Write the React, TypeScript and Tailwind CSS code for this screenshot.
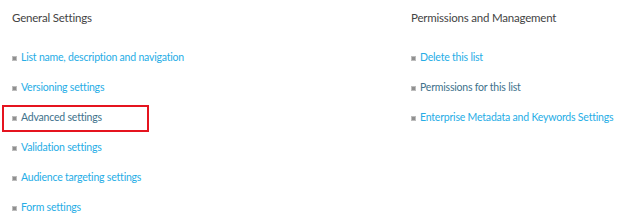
const general = [
  { label: "List name, description and navigation" },
  { label: "Versioning settings" },
  { label: "Advanced settings", visited: true, marked: true },
  { label: "Validation settings" },
  { label: "Audience targeting settings" },
  { label: "Form settings" },
];

const permissions = [
  { label: "Delete this list" },
  { label: "Permissions for this list", visited: true },
  { label: "Enterprise Metadata and Keywords Settings" },
];

type Item = { label: string; visited?: boolean; marked?: boolean };

function Bullet() {
  return <span className="inline-block w-[5px] h-[5px] bg-[#8f8f8f] border border-[#bdbdbd] shrink-0" />;
}

function Row({ item }: { item: Item }) {
  return (
    <li className="relative h-[30px] flex items-center gap-[4px] whitespace-nowrap">
      <Bullet />
      <span className={item.visited ? "text-[#40728c]" : "text-[#26ade6]"}>{item.label}</span>
      {item.marked && (
        <span className="absolute left-[-10px] top-[2px] w-[147px] h-[27px] border-2 border-[#e5141f]" />
      )}
    </li>
  );
}

function Column({ title, items, className }: { title: string; items: Item[]; className?: string }) {
  return (
    <section className={className}>
      <h2 className="text-[11.5px] tracking-[-0.2px] text-[#444] leading-[16px] whitespace-nowrap">{title}</h2>
      <ul className="mt-[17px] text-[10.5px] tracking-[-0.2px]">
        {items.map((it) => (
          <Row key={it.label} item={it} />
        ))}
      </ul>
    </section>
  );
}

export default function App() {
  return (
    <main
      className="w-[624px] h-[219px] bg-white overflow-hidden flex pl-[12px] pt-[10px]"
      style={{ fontFamily: '"Segoe UI", Lato, "Open Sans", sans-serif' }}
    >
      <Column title="General Settings" items={general} className="w-[399px] shrink-0" />
      <Column title="Permissions and Management" items={permissions} className="min-w-0" />
    </main>
  );
}
